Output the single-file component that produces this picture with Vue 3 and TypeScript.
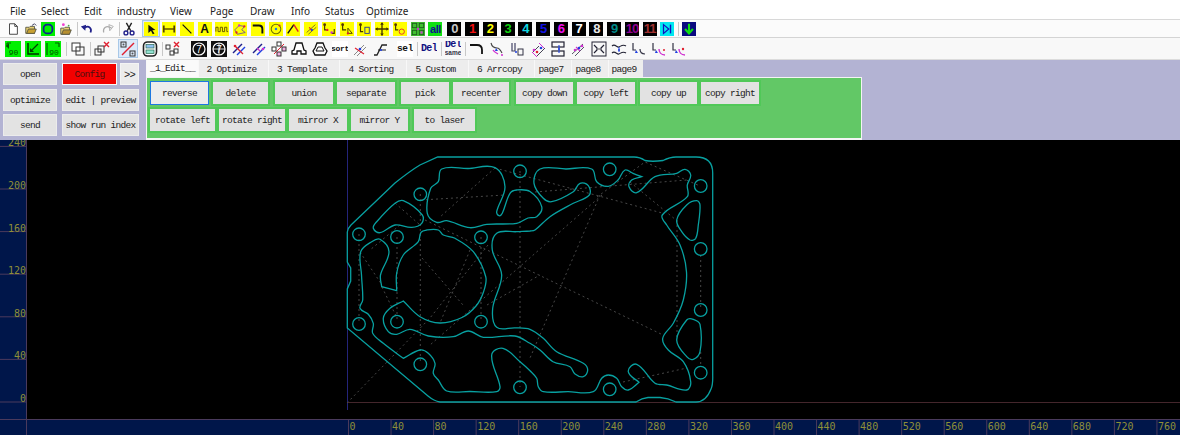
<script setup lang="ts">
type Item = { sep?: number; line?: boolean; bg?: string; p?: string; t?: string; c?: string; cls?: string; sel?: boolean; sub?: string }
type Pt = [number, number] | [number, number, number]

const menu = [
  { n: 'File', w: 31 }, { n: 'Select', w: 43 }, { n: 'Edit', w: 33 }, { n: 'industry', w: 53 }, { n: 'View', w: 40 },
  { n: 'Page', w: 40 }, { n: 'Draw', w: 41 }, { n: 'Info', w: 34 }, { n: 'Status', w: 41 }, { n: 'Optimize', w: 50 },
]

const Y = '#ffff00'
const G = '#00f000'
const N = '#20208a'
const R = '#e02030'
const M = '#d030d0'
const B = '#2040e0'
const K = '#111'
const ln = (d: string, c = K, w = 1.3) => `<path d="${d}" fill="none" stroke="${c}" stroke-width="${w}"/>`
const dot = (x: number, y: number, c = M, r = 1.3) => `<circle cx="${x}" cy="${y}" r="${r}" fill="${c}"/>`
const digit = (t: string, c: string): Item => ({ bg: '#000', t, c, cls: 'digit' })

const row1: Item[] = [
  { p: `<path d="M4 2h6l3 3v9H4z" fill="#fff" stroke="#333"/><path d="M10 2v3h3" fill="none" stroke="#333"/>` },
  { p: `<path d="M2 13V6h4l1-1h5v8z" fill="#e8d070" stroke="#554"/><path d="M3 13l2-5h9l-2 5z" fill="#c8a030" stroke="#554"/><path d="M9 4l3-2 2 2" fill="none" stroke="#335"/>` },
  { bg: G, p: `<rect x="3" y="3" width="10" height="10" rx="4" fill="none" stroke="#102090" stroke-width="2"/>` },
  { p: `<path d="M2 14V7h4l1-1h5v8z" fill="#e8d070" stroke="#554"/><path d="M3 14l2-5h9l-2 5z" fill="#b89030" stroke="#554"/>${dot(5, 3, '#f040d0', 1.6)}${dot(11, 4, '#40b040', 1)}` },
  { sep: 3, line: true },
  { p: ln('M12 12c2-5-2-8-6-6L4 7', N, 2) + `<path d="M1 5l6-2-1 7z" fill="${N}"/>` },
  { sep: 3 },
  { p: ln('M3 12c-1-5 3-8 7-6l2 1', '#aaa', 1.4) + `<path d="M14 5l-5-2 1 7z" fill="none" stroke="#aaa"/>` },
  { sep: 4, line: true },
  { p: ln('M5 1l5 9M11 1L6 10', '#222', 1.6) + `<circle cx="4.5" cy="12.5" r="2.2" fill="none" stroke="${N}" stroke-width="1.6"/><circle cx="11.5" cy="12.5" r="2.2" fill="none" stroke="${N}" stroke-width="1.6"/>` },
  { sep: 4 },
  { bg: Y, sel: true, p: `<path d="M5 3l8 6-3.5.5L12 13l-2 1-2-4-3 2.5z" fill="#111"/>` },
  { bg: Y, p: ln('M2 4v8M14 4v8', '#554400', 2) + ln('M2 8h12', '#554400', 1.6) },
  { bg: Y, p: ln('M3 3l10 10', K, 1.5) },
  { bg: Y, t: 'A', c: '#111', cls: 'letter' },
  { bg: Y, p: ln('M1 11V6h2.5v5H6V6h2.5v5H11V6h2.5v5H15', '#665500', 1.1) },
  { bg: Y, p: ln('M2 9l5-5 6 1-3 4 4 3-9 2z', '#705090', 1) + dot(7, 4) + dot(13, 5, R) + dot(4, 12, R) },
  { bg: Y, p: ln('M2 4h7c3 0 4 2 4 4v5', K, 2.2) },
  { bg: Y, p: `<circle cx="8" cy="8" r="5.5" fill="none" stroke="#707000" stroke-width="1.2"/>` + dot(8, 8, '#2080e0', 1.4) + dot(12, 4, R, 1.2) },
  { bg: Y, p: ln('M2 13L9 3', K, 1.6) + ln('M9 3l5 8', R, 1.6) },
  { bg: Y, p: ln('M3 12L13 3', '#807020', 1.1) + ln('M5 14l9-8', '#807020', 1.1) + ln('M6 6l3 4', R, 1.4) + dot(9, 9, B) },
  { bg: Y, p: ln('M3 3v6h2M11 13h3V8', '#443300', 1.3) + dot(3, 3, '#553300', 1.6) + dot(6, 9, R, 1.4) + dot(11, 12, M, 1.4) },
  { bg: Y, p: ln('M3 2v7h4', '#443300', 1.3) + `<path d="M9 7v6h5z" fill="none" stroke="#443300"/>` + dot(3, 3, '#553300', 1.6) + dot(9, 13, R) },
  { bg: Y, p: ln('M4 2v9h3', '#443300', 1.3) + `<rect x="9" y="6" width="5" height="7" fill="none" stroke="#2030a0"/>` + dot(4, 3, '#553300', 1.6) },
  { bg: Y, p: ln('M8 1v14M1 8h14', '#443300', 1.5) + `<path d="M8 0l2 3H6zM8 16l2-3H6zM0 8l3-2v4zM16 8l-3-2v4z" fill="#443300"/>` },
  { bg: Y, p: ln('M3 3v6h3', '#443300', 1.3) + `<circle cx="10" cy="11" r="3" fill="none" stroke="${R}"/>` + dot(3, 3, '#553300', 1.6) },
  { bg: '#40c030', p: `<rect x="1.5" y="1.5" width="5" height="5" fill="none" stroke="#1a5a1a"/><rect x="9.5" y="1.5" width="5" height="5" fill="none" stroke="#1a5a1a"/><rect x="1.5" y="9.5" width="5" height="5" fill="none" stroke="#1a5a1a"/><rect x="9.5" y="9.5" width="5" height="5" fill="none" stroke="#1a5a1a"/>` + dot(8, 8) + dot(12, 12, M) },
  { bg: '#10e010', t: 'all', c: '#101090', cls: 'all' },
  { sep: 1 },
  digit('0', '#c8c8c8'), digit('1', '#f01010'), digit('2', '#ffff00'), digit('3', '#10d010'), digit('4', '#10d8e0'),
  digit('5', '#1010e0'), digit('6', '#f010f0'), digit('7', '#ffffff'), digit('8', '#e8e8e8'), digit('9', '#008a8a'),
  digit('10', '#900090'), digit('11', '#a03030'),
  { bg: '#00e8f0', p: `<path d="M4 3l6 5-6 5z" fill="none" stroke="#1010c0" stroke-width="1.4"/>` + ln('M12 3v10', '#1010c0', 1.6) },
  { sep: 4, line: true },
  { bg: '#0a0a80', p: ln('M8 2v10', '#10e010', 2.4) + ln('M3.5 8L8 13l4.5-5', '#10e010', 2.4) },
]

const blk = (t: string) => `<circle cx="8" cy="8" r="6" fill="none" stroke="#fff" stroke-width="1.2"/><text x="8" y="11.5" text-anchor="middle" font-size="10" font-family="Liberation Sans" fill="#fff">${t}</text>`

const row2: Item[] = [
  { bg: G, p: ln('M2 2h4M2 2v4', '#006000', 1.2) + `<text x="8.5" y="14" text-anchor="middle" font-size="8" font-family="Liberation Mono" fill="#005000">90</text>` + `<path d="M1 5l3-3v6z" fill="#005000"/>` },
  { bg: G, p: ln('M3 2v11h11', '#003000', 1.5) + ln('M13 3L6 10', '#004000', 1.2) + `<path d="M5 7v4h4z" fill="#004000"/>` },
  { bg: G, p: ln('M14 2h-4M14 2v4', '#006000', 1.2) + ln('M2 2v12', '#006000', 1.2) + `<text x="9" y="14" text-anchor="middle" font-size="8" font-family="Liberation Mono" fill="#005000">90</text>` },
  { sep: 5, line: true },
  { p: `<rect x="2" y="2" width="8" height="8" fill="#fff" stroke="#333"/><rect x="6" y="6" width="8" height="8" fill="none" stroke="#333"/>` },
  { sep: 4, line: true },
  { p: `<rect x="1" y="8" width="6" height="6" fill="none" stroke="#333"/><rect x="4" y="5" width="6" height="6" fill="none" stroke="#333"/>` + ln('M10 1l5 5M15 1l-5 5', R, 1.4) },
  { sep: 6 },
  { sel: true, p: `<rect x="1" y="1" width="5" height="5" fill="none" stroke="#333"/><rect x="10" y="10" width="5" height="5" fill="none" stroke="#333"/>` + ln('M2 14L14 2', R, 1.4) + dot(3.5, 3.5, '#555', 1) + dot(12.5, 12.5, '#555', 1) },
  { sep: 2 },
  { p: `<rect x="1.5" y="1" width="13" height="14" rx="4" fill="#fff" stroke="#222" stroke-width="1.6"/><rect x="4" y="3.5" width="8" height="3.5" fill="#90c0f0" stroke="#2a6a50" stroke-width=".7"/><rect x="4" y="9" width="8" height="3.5" fill="#90e0d0" stroke="#2a6a50" stroke-width=".7"/>` },
  { sep: 3, line: true },
  { p: `<rect x="1" y="4" width="4" height="4" fill="none" stroke="#333"/><rect x="5" y="10" width="4" height="4" fill="none" stroke="#333"/><rect x="9" y="8" width="4" height="4" fill="none" stroke="#333"/>` + ln('M9 1l5 5M14 1L9 6', R, 1.4) },
  { sep: 6 },
  { bg: '#111', p: blk('7') },
  { bg: '#111', p: `<circle cx="8" cy="8" r="6" fill="none" stroke="#fff" stroke-width="1.2"/>` + ln('M2 8h12M8 2v12', '#fff', .8) + `<text x="8" y="12" text-anchor="middle" font-size="10" font-family="Liberation Sans" fill="#fff">7</text>` },
  { p: ln('M2 12L11 3', N, 1.4) + ln('M6 14l8-8', B, 1.4) + ln('M4 5l8 8', R, 1.3) + dot(4, 5, R) },
  { p: ln('M2 12L11 3', N, 1.4) + ln('M6 14l8-8', B, 1.4) + ln('M6 7l3 3', M, 1.3) + dot(12, 8, M) },
  { p: ln('M3 13L13 3', R, 1) + `<rect x="6" y="1" width="4" height="4" fill="#fff" stroke="#333"/><rect x="1" y="6" width="4" height="4" fill="#fff" stroke="#333"/><rect x="11" y="6" width="4" height="4" fill="#f0b0e0" stroke="#333"/><rect x="6" y="11" width="4" height="4" fill="#f0b0e0" stroke="#333"/>` },
  { p: `<path d="M5 2h6l2 7 2 1v3h-5V10H6v3H1v-3l2-1z" fill="#fff" stroke="#111" stroke-width="1.3"/>` },
  { sep: 1 },
  { p: `<path d="M5 2h6l2 5 2 3-2 4H3l-2-4 2-3z" fill="#fff" stroke="#111" stroke-width="1.3"/><path d="M6 6h4l2 4H4z" fill="none" stroke="#111"/>` },
  { t: 'sort', c: '#111', cls: 'sort' },
  { p: ln('M2 14L12 4', '#888', 1) + ln('M5 15l9-9', '#888', 1) + ln('M3 7l9 6', R, 1.2) + dot(8, 8, B) },
  { p: ln('M2 14h3L10 4h5', '#222', 1.3) + ln('M6 9h8', '#222', 1) + dot(9, 9, B, 1.1) },
  { sep: 5 },
  { t: 'sel', c: '#111', cls: 'sort big' },
  { sep: 4, line: true },
  { t: 'Del', c: '#101080', cls: 'del' },
  { sep: 4, line: true },
  { t: 'Del', sub: 'same', c: '#101080', cls: 'del two' },
  { sep: 3, line: true },
  { p: ln('M2 4h7c3 0 5 2 5 5v4', '#111', 1.8) },
  { sep: 1 },
  { p: ln('M2 2c1 4 4 5 6 5s4 3 5 5', '#444', 1.1) + ln('M4 9c1 2 3 3 5 4', M, 1.3) + `<path d="M7 7l2 3h-3z" fill="${B}"/>` + dot(13, 14, M, 1) },
  { p: ln('M3 2v8h3V2', '#446', 1.2) + `<rect x="9" y="8" width="5" height="6" fill="none" stroke="#334"/>` + dot(7, 11, B, 1) },
  { sep: 1 },
  { p: ln('M2 12L9 5M7 15l8-8', '#445', 1) + ln('M2 11l5 5M9 2l5 5', M, 1) + dot(4, 9) + dot(11, 7, B) + dot(7, 11, R) },
  { p: `<rect x="2" y="1" width="12" height="5" fill="none" stroke="#223" stroke-width="1.2"/><rect x="2" y="10" width="12" height="5" fill="none" stroke="#223" stroke-width="1.2"/>` + ln('M9 4v8', '#2040e0', 1.1) + dot(9, 8, B, 1) },
  { p: ln('M2 13L13 3', '#556', 1) + ln('M5 15l9-9', '#556', 1) + ln('M6 6l4 4', M, 1.1) + dot(5, 9) + dot(9, 7, B) + dot(12, 5) },
  { sep: 1 },
  { p: `<rect x="1" y="1" width="14" height="14" fill="none" stroke="#223"/>` + ln('M3 4l3 3v2l-3 3M13 4l-3 3v2l3 3', '#223', 1.2) + dot(8, 8, '#888', 1) },
  { p: ln('M1 5c3-3 5 2 7 1s4-3 7-1M1 12c3-3 5 2 7 1s4-3 7-1', '#223', 1.1) + ln('M8 6v5', B, 1) + dot(8, 9, B, 1) },
  { p: ln('M2 2v7h3M9 8c0 3 2 5 5 5', '#334', 1.2) + `<path d="M5 9l2 3H4z" fill="${B}"/>` },
  { p: ln('M2 2v7h3', '#334', 1.2) + ln('M8 8c0 3 2 6 6 6', M, 1.4) + `<path d="M5 9l2 3H4z" fill="${B}"/>` + dot(13, 9, R, 1) },
  { p: ln('M2 2v7h3', '#334', 1.2) + ln('M8 8c0 3 2 6 6 6', M, 1.4) + `<path d="M5 9l2 3H4z" fill="${B}"/>` + dot(12, 8, R, 1.2) },
]

const tabs = [
  { n: '_1_Edit__', w: 52, on: true }, { n: '2 Optimize', w: 70 }, { n: '3 Template', w: 71 }, { n: '4 Sorting', w: 67 },
  { n: '5 Custom', w: 62 }, { n: '6 Arrcopy', w: 66 }, { n: 'page7', w: 37 }, { n: 'page8', w: 37 }, { n: 'page9', w: 35 },
]
const btn1 = [
  { n: 'reverse', w: 59, m: 0, on: true }, { n: 'delete', w: 57, m: 3 }, { n: 'union', w: 60, m: 5 }, { n: 'separate', w: 60, m: 2 },
  { n: 'pick', w: 50, m: 4 }, { n: 'recenter', w: 58, m: 2 }, { n: 'copy down', w: 59, m: 5 }, { n: 'copy left', w: 60, m: 2 },
  { n: 'copy up', w: 59, m: 3 }, { n: 'copy right', w: 60, m: 2 },
]
const btn2 = [
  { n: 'rotate left', w: 67, m: -1 }, { n: 'rotate right', w: 68, m: 2 }, { n: 'mirror X', w: 60, m: 2 },
  { n: 'mirror Y', w: 59, m: 2 }, { n: 'to laser', w: 63, m: 4 },
]

// Third value marks a sharp corner: the curve arrives and leaves straight there.
function spline(pts: Pt[]): string {
  const n = pts.length
  const at = (i: number) => pts[(i + n) % n]
  let d = `M${pts[0][0]} ${pts[0][1]}`
  const unit = (a: Pt, b: Pt): [number, number] => {
    const dx = b[0] - a[0], dy = b[1] - a[1]
    const l = Math.hypot(dx, dy) || 1
    return [dx / l, dy / l]
  }
  for (let i = 0; i < n; i++) {
    const p = at(i), q = at(i + 1)
    const l = Math.hypot(q[0] - p[0], q[1] - p[1]) / 3
    const t1 = p[2] ? unit(p, q) : unit(at(i - 1), q)
    const t2 = q[2] ? unit(p, q) : unit(p, at(i + 2))
    d += `C${(p[0] + t1[0] * l).toFixed(1)} ${(p[1] + t1[1] * l).toFixed(1)} ${(q[0] - t2[0] * l).toFixed(1)} ${(q[1] - t2[1] * l).toFixed(1)} ${q[0]} ${q[1]}`
  }
  return d + 'Z'
}

const outer = 'M347.3 232Q348 228 351 225L395 183Q410 171 420 165L437.7 157H634Q640 157 645 160.5Q652 162 663 160.5Q670 157 676 157H696Q712.7 157 712.7 173V375Q713 385 711 389Q706 402 696 402H676Q668 398 660 397.5H648Q642 398 636 402H440Q434 401 428 396L347.3 328V289L350.7 281V268L347.3 262Z'

const big: Pt[] = [
  [540, 169], [566, 169], [591.7, 169], [596.7, 181.7], [608.3, 186.3], [618, 180], [625, 170], [633, 173.3], [641.7, 176.7, 1], [631.7, 180], [629, 186.7], [636.7, 192.7],
  [655, 176.7], [676.7, 173.3], [685, 169.3], [690.7, 175], [687.3, 185], [687.3, 196.7], [662.3, 215], [666.7, 225], [680, 245], [686.5, 272], [683.3, 300], [673.3, 323.3],
  [662.7, 338.3], [668.3, 350], [683.3, 361.7], [690.7, 381.7], [686.7, 390], [666.7, 385], [655, 383.3], [636.7, 364.3], [628.3, 371.7], [639, 382.3, 1], [628.3, 390], [621.7, 386.7],
  [616.7, 378.3], [608.3, 375], [601.7, 378.3], [593.3, 391.7], [568, 391.7], [543.3, 391.7], [538.3, 386.7], [536.7, 378.3], [530, 370.7], [520, 361.7], [503, 348.3], [491.7, 355],
  [500, 386.7], [496.7, 391.7], [470, 391.5], [446.7, 391], [438.3, 380], [433.3, 373.3], [435, 363.3], [428.3, 353.3], [420, 350], [403.3, 358.3, 1], [383.3, 343.3], [372.7, 333.3],
  [373.3, 323.3], [368.3, 314.3], [360, 308.3], [362.7, 300], [361.5, 275], [360.7, 251.7], [371.7, 241.7], [380, 239.3], [389, 251.7], [380.5, 275], [381.7, 286.7, 1], [396.7, 290.7, 1],
  [396.7, 273], [403.3, 255], [418.3, 241.7], [421, 232.3], [426.7, 230], [438.3, 230], [443.3, 235], [455, 238.3], [473.3, 251.7], [485.8, 277], [483.5, 292], [476, 306], [462, 317.5], [440, 323],
  [420, 316.7], [403.3, 301, 1], [390, 308.3], [383.3, 318.3], [388.3, 331.7], [396.7, 334.3], [410, 329.3], [428.3, 336], [453.3, 336.7], [468.3, 331], [483.3, 337.3], [515, 336],
  [530, 343.3], [540, 350], [553, 361.7], [570, 366.7], [575, 374], [583.3, 376.7], [587.7, 370], [583.3, 363.3], [556.7, 351.7], [543.3, 338.3], [530, 329.3], [515, 327.8], [496.7, 327.3],
  [492.7, 308.3], [501.7, 275], [492.3, 250], [496.7, 233.3], [516.7, 231.7], [530, 231], [535, 230], [550, 216.7], [573.3, 203.3], [589.3, 195], [588.3, 185.7], [580, 183.3],
  [573.3, 191.7], [551.7, 201.7], [543.3, 198.3], [534, 183.3],
]
const inner1: Pt[] = [
  [441.7, 169], [468, 168.5], [495, 167.7], [505, 186.7], [496.7, 211.7], [499, 215.7], [502.3, 213.3], [510, 193.3], [516.7, 190], [530, 191.5], [541.7, 206.7], [536.7, 216.7],
  [528, 218], [516.7, 223.3], [486.7, 224.3], [470, 227.7], [446.7, 220.7], [436.7, 222.3], [427.3, 213.3], [430.7, 188.3], [438.3, 181.7],
]
const inner2: Pt[] = [[373.3, 228.3], [380, 232.7], [395, 225], [411.7, 227.3], [421.7, 223.3], [422.3, 215], [403.3, 200.7], [395, 203.3], [376.7, 221.7]]
const inner3: Pt[] = [[676.7, 220], [686.7, 205], [696.7, 200.7], [700, 205], [698.3, 225], [695.7, 238.3], [690, 240], [681.7, 231.7]]
const inner4: Pt[] = [[676.7, 340], [686.7, 320], [693.3, 319.3], [700, 324.3], [700, 351.7], [693.3, 359.3], [686.7, 356.7]]
const contours = [big, inner1, inner2, inner3, inner4].map((c) => spline(c))

const holes: [number, number][] = [
  [359, 234.3], [397, 237], [420.3, 194.3], [481, 237.3], [520, 171.3], [609.7, 169.3], [700.7, 186], [700.7, 249],
  [359, 324], [397, 321.7], [420.3, 364.3], [481, 321.7], [520, 387.3], [700.7, 310], [700.7, 372.7], [609.7, 389.3],
]
const travel = [
  'M347 403L430 318L488 245', 'M420.3 194V364', 'M520 171V387', 'M481 237V322', 'M397 237V322', 'M359 234V324', 'M421 200L505 195',
  'M495 168L440 217', 'M495 168L662 213', 'M600 195L530 358', 'M597 197L645 162L700 186', 'M602 195L430 345', 'M425 220L663 335',
  'M535 192L687 180', 'M630 182L676 220', 'M623 382L687 368', 'M677 220V340', 'M700.7 255V310', 'M360 252L382 285', 'M382 287L397 318',
  'M422 258L463 305', 'M487 305L540 275', 'M395 203L420 225', 'M400 225L370 250', 'M470 250L440 323', 'M700.7 352V365',
]

const xt = Array.from({ length: 20 }, (_, i) => ({ x: 348.5 + i * 42.55, l: String(i * 40) }))
const yt = Array.from({ length: 7 }, (_, i) => ({ y: 402 - i * 42.6, l: String(i * 40) }))
</script>

<template>
  <div class="app">
    <nav class="menu">
      <span v-for="m in menu" :key="m.n" :style="{ width: m.w + 'px' }">{{ m.n }}</span>
    </nav>

    <div class="bar bar1">
      <template v-for="(it, i) in row1" :key="i">
        <i v-if="it.sep" class="sp" :class="{ ln: it.line }" :style="{ width: it.sep + 'px' }"></i>
        <div v-else class="tool" :class="{ sel: it.sel }">
          <div class="face" :class="it.cls" :style="{ background: it.bg, color: it.c }">
            <svg v-if="it.p" viewBox="0 0 16 16" v-html="it.p"></svg>
            <template v-else>{{ it.t }}</template>
          </div>
        </div>
      </template>
    </div>

    <div class="bar bar2">
      <template v-for="(it, i) in row2" :key="i">
        <i v-if="it.sep" class="sp" :class="{ ln: it.line }" :style="{ width: it.sep + 'px' }"></i>
        <div v-else class="tool" :class="{ sel: it.sel }">
          <div class="face" :class="it.cls" :style="{ background: it.bg, color: it.c }">
            <svg v-if="it.p" viewBox="0 0 16 16" v-html="it.p"></svg>
            <template v-else>{{ it.t }}<small v-if="it.sub">{{ it.sub }}</small></template>
          </div>
        </div>
      </template>
    </div>

    <section class="panel">
      <div class="side">
        <button class="b">open</button>
        <button class="b cfg">Config</button>
        <button class="b more">&gt;&gt;</button>
        <button class="b">optimize</button>
        <button class="b wide">edit | preview</button>
        <button class="b">send</button>
        <button class="b wide">show run index</button>
      </div>
      <div class="work">
        <div class="tabs">
          <span v-for="t in tabs" :key="t.n" class="tab" :class="{ on: t.on }" :style="{ width: t.w + 'px' }">{{ t.n }}</span>
        </div>
        <div class="green">
          <div class="grow">
            <button v-for="b in btn1" :key="b.n" class="b g" :class="{ focus: b.on }" :style="{ width: b.w + 'px', marginLeft: b.m + 'px' }">{{ b.n }}</button>
          </div>
          <div class="grow two">
            <button v-for="b in btn2" :key="b.n" class="b g" :style="{ width: b.w + 'px', marginLeft: b.m + 'px' }">{{ b.n }}</button>
          </div>
        </div>
      </div>
    </section>

    <svg class="cad" width="1180" height="295" viewBox="0 140 1180 295">
      <rect x="0" y="140" width="1180" height="295" fill="#000" />
      <rect x="0" y="140" width="26" height="295" fill="#00164a" />
      <rect x="0" y="419" width="1180" height="16" fill="#00164a" />
      <path d="M347.5 140V410" stroke="#24247a" fill="none" />
      <path d="M347 402.5H1180" stroke="#44262c" fill="none" />
      <path d="M0 419.5H1180M26.5 140V435" stroke="#4a3a5c" fill="none" />
      <g v-for="t in yt" :key="t.l">
        <path :d="`M0 ${t.y}H26`" stroke="#4a3a5c" fill="none" />
        <text x="26" :y="t.y" text-anchor="end" class="rl">{{ t.l }}</text>
      </g>
      <g v-for="t in xt" :key="t.l">
        <path :d="`M${t.x} 419V435`" stroke="#4a3a5c" fill="none" />
        <text :x="t.x + 1" y="430" class="rl">{{ t.l }}</text>
      </g>
      <path v-for="(d, i) in travel" :key="i" :d="d" fill="none" stroke="#474747" stroke-width="1" stroke-dasharray="2 3" />
      <path :d="outer" fill="none" stroke="#08a0a0" stroke-width="1.3" />
      <path v-for="(d, i) in contours" :key="'c' + i" :d="d" fill="none" stroke="#08a0a0" stroke-width="1.3" />
      <circle v-for="(h, i) in holes" :key="'h' + i" :cx="h[0]" :cy="h[1]" r="6.3" fill="none" stroke="#08a0a0" stroke-width="1.3" />
    </svg>
  </div>
</template>

<style scoped>
.app { width: 1180px; height: 435px; overflow: hidden; background: #000; font-family: "Noto Sans", sans-serif; }
.menu { display: flex; align-items: center; padding: 2px 0 0 10px; background: #fff; border-bottom: 1px solid #d8d8d8; font-size: 10px; color: #222; box-sizing: border-box; height: 20px; }
.menu span { display: block; white-space: nowrap; }
.bar { display: flex; align-items: center; background: #fbfbfb; border-bottom: 1px solid #d4d4d4; box-sizing: border-box; }
.bar1 { height: 18px; padding-left: 4px; }
.bar2 { height: 22px; padding-left: 3px; background: #f8f8f8; border-bottom: 1px solid #dcdcdc; }
.sp { display: block; height: 14px; position: relative; flex: none; }
.sp.ln::after { content: ""; position: absolute; left: 50%; top: 0; bottom: 0; width: 1px; background: #c8c8c8; }
.tool { flex: none; display: flex; align-items: center; justify-content: center; box-sizing: border-box; }
.bar1 .tool { width: 17.78px; height: 17px; }
.bar2 .tool { width: 20px; height: 19px; }
.tool.sel { background: #dceafa; box-shadow: inset 0 0 0 1px #a8c8e8; }
.face { display: flex; align-items: center; justify-content: center; overflow: hidden; }
.bar1 .face { width: 14px; height: 14px; }
.bar2 .face { width: 16px; height: 16px; }
.face svg { display: block; width: 100%; height: 100%; }
.digit { font: bold 13px "Liberation Sans", sans-serif; letter-spacing: -1px; }
.letter { font: bold 12px "Liberation Sans", sans-serif; }
.all { font: bold 11px "Liberation Sans", sans-serif; letter-spacing: -.5px; }
.sort { font: bold 8px "Liberation Mono", monospace; background: #fff; letter-spacing: -.3px; }
.sort.big { font-size: 9.5px; }
.del { font: bold 10px "Liberation Mono", monospace; letter-spacing: -.6px; }
.del.two { flex-direction: column; line-height: 8px; }
.del small { font: bold 6.5px "Liberation Sans", sans-serif; letter-spacing: 0; color: #334; }
.panel { height: 80px; display: flex; background: #b3b3d3; box-sizing: border-box; }
.side { width: 146px; flex: none; padding: 3px 0 0 3px; box-sizing: border-box; display: grid; grid-template-columns: 54px 55px 21px; grid-template-rows: 22px 22px 22px; column-gap: 5px; row-gap: 3.5px; }
.b { font: 9.5px "Liberation Mono", monospace; letter-spacing: -.7px; color: #222; background: #e3e3e3; border: 1px solid #ececec; padding: 1px 0 0; white-space: nowrap; box-sizing: border-box; }
.wide { grid-column: span 2; width: 77px; }
.cfg { background: #f40000; border: 1px solid #f8f8f8; color: #4a1010; }
.more { background: #ececec; border-color: #f4f4f4; font-size: 10.5px; width: 19px; margin-left: -2px; }
.work { flex: none; width: 716px; display: flex; flex-direction: column; }
.tabs { display: flex; height: 17px; }
.tab { font: 9.5px/19px "Liberation Mono", monospace; letter-spacing: -.7px; color: #222; background: #ededed; border-left: 1px solid #f8f8f8; box-sizing: border-box; text-align: center; white-space: nowrap; padding-right: 4px; }
.tab.on { background: #fafafa; line-height: 17px; padding-right: 0; }
.green { height: 63px; background: #62c866; border: 1px solid #f4f4f4; border-bottom-width: 2px; box-sizing: border-box; padding: 3px 0 0 3px; }
.grow { display: flex; height: 24px; }
.grow.two { margin-top: 3px; }
.g { flex: none; border: 1px solid #50c858; height: 100%; outline: 1px solid #50c858; background: #e2e2e2; }
.focus { border: 1.5px solid #1e78e0; outline: none; background: #ececec; }
.cad { display: block; }
.rl { font: 10px "DejaVu Sans Mono", monospace; fill: #8f8f38; }
</style>

<style>
html, body { margin: 0; padding: 0; background: #000; overflow: hidden; }
</style>
